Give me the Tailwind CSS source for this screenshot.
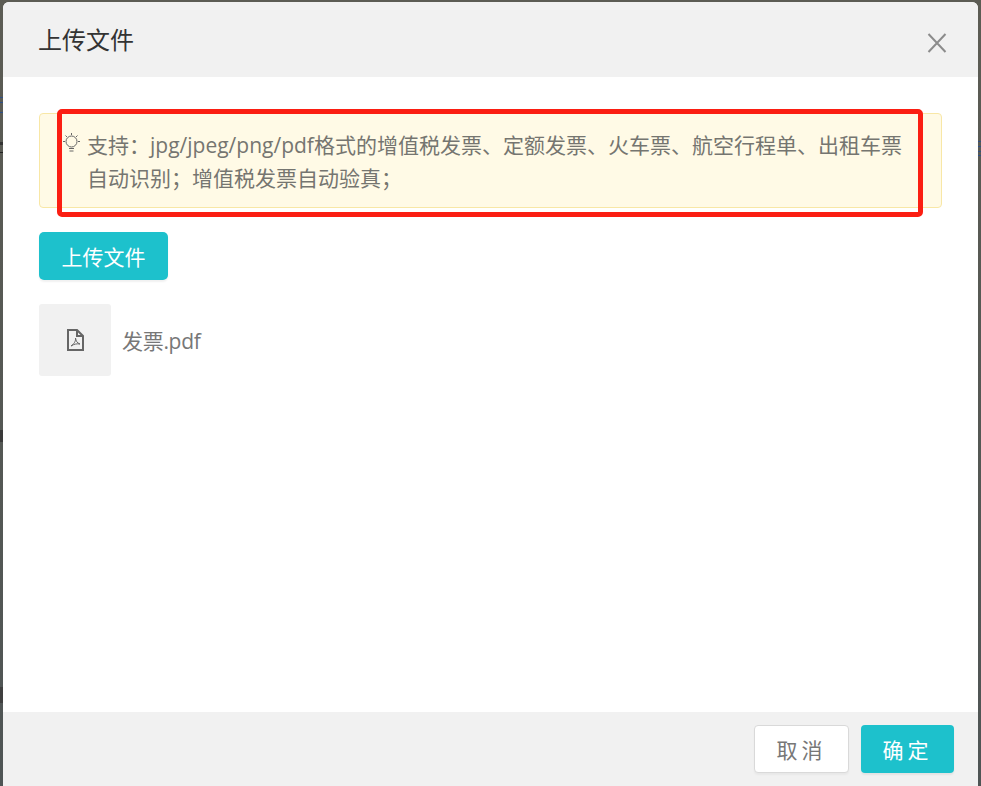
<!DOCTYPE html>
<html lang="zh-CN">
<head>
<meta charset="utf-8">
<title>上传文件</title>
<script src="https://cdn.jsdelivr.net/npm/@tailwindcss/browser@4"></script>
</head>
<body class="relative w-[981px] h-[786px] overflow-hidden bg-gradient-to-b from-[#5c5c54] to-[#4f5555] font-['Open_Sans','Noto_Sans_CJK_SC',sans-serif]">
    <!-- Bits of the page behind the overlay, visible in the gutters -->
    <div class="absolute left-0 top-[97px] w-[3px] h-[1px] bg-[#2f4f86]"></div>
    <div class="absolute left-0 top-[102px] w-[3px] h-[1px] bg-[#2f4f86]"></div>
    <div class="absolute left-0 top-[112px] w-[3px] h-[1px] bg-[#2f4f86]"></div>
    <div class="absolute left-0 top-[142px] w-[3px] h-[3px] bg-[#333]"></div>
    <div class="absolute left-0 top-[152px] w-[3px] h-[1px] bg-[#222]"></div>
    <div class="absolute left-0 top-[430px] w-[3px] h-[12px] bg-[#3a3a3a]"></div>
    <div class="absolute left-0 top-[687px] w-[3px] h-[16px] bg-[#3f3f3f]"></div>
    <div class="absolute right-0 top-[141px] w-[3px] h-[1px] bg-[#2f4f86]"></div>
    <div class="absolute right-0 top-[146px] w-[3px] h-[1px] bg-[#2f4f86]"></div>
    <div class="absolute right-0 top-[151px] w-[3px] h-[1px] bg-[#2f4f86]"></div>
    <div class="absolute right-0 top-[155px] w-[3px] h-[1px] bg-[#2f4f86]"></div>

    <!-- Modal -->
    <div class="relative ml-[3px] mt-[2px] w-[975px] h-[784px] flex flex-col bg-white rounded-t-[6px] overflow-hidden">
        <!-- Header -->
        <div class="h-[75px] shrink-0 bg-[#f1f1f1] flex items-center justify-between pl-[35px] pr-[31px]">
            <h1 class="text-[24px] leading-[32px] text-[#333]">上传文件</h1>
            <svg class="w-[20px] h-[20px] mt-[6px]" viewBox="0 0 20 20" fill="none" stroke="#8c8c8c" stroke-width="2">
                <path d="M1.5 1 L18.5 19 M18.5 1 L1.5 19"/>
            </svg>
        </div>

        <!-- Body -->
        <div class="flex-1 pt-[36px] px-[36px]">
            <!-- Notice -->
            <div class="w-[903px] h-[95px] flex bg-[#fffae6] border border-[#f8e7a6] rounded-[4px] pl-[22px] pt-[15px]">
                <svg class="w-[20px] h-[22px] shrink-0 mt-[3px]" viewBox="0 0 20 22" fill="none" stroke="#666" stroke-width="1">
                    <circle cx="9.5" cy="9.5" r="5.5"/>
                    <path d="M7 16.5 H12 M7.5 19 H11.5 M9.5 1 V3 M3.5 3.5 L5 5 M15.5 3.5 L14 5 M1 9.5 H3 M16 9.5 H18"/>
                </svg>
                <p class="ml-[5px] w-[820px] text-[21px] leading-[33px] text-[#757570]">支持：jpg/jpeg/png/pdf格式的增值税发票、定额发票、火车票、航空行程单、出租车票自动识别；增值税发票自动验真；</p>
            </div>

            <!-- Upload button -->
            <button class="block mt-[24px] w-[129px] h-[48px] pt-[3px] bg-[#1dc1cc] rounded-[5px] text-white text-[21px] shadow-[0_2px_2px_rgba(0,0,0,0.06)]">上传文件</button>

            <!-- File item -->
            <div class="mt-[24px] flex items-center gap-[11px]">
                <div class="w-[72px] h-[72px] bg-[#f1f1f1] rounded-[3px] flex items-center justify-center">
                    <svg class="w-[18px] h-[22px]" viewBox="0 0 18 22" fill="none" stroke="#666" stroke-width="2">
                        <path d="M2 1 H11 L17 7 V21 H2 Z M11 1 V7 H17"/>
                        <path d="M5 17 C8 15 10 12 9.5 9 C10 12 11 14 14 15 C11 14.5 8 15 5 17 Z" stroke-width="1"/>
                    </svg>
                </div>
                <span class="text-[21px] pt-[4px] tracking-[-0.3px] text-[#777]">发票.pdf</span>
            </div>
        </div>

        <!-- Footer -->
        <div class="h-[74px] shrink-0 bg-[#f1f1f1] flex justify-end gap-[12px] pt-[13px] pr-[24px]">
            <button class="w-[95px] h-[48px] pt-[3px] bg-white border border-[#d9d9d9] rounded-[4px] text-[21px] tracking-[4px] text-[#777] shadow-[0_2px_2px_rgba(0,0,0,0.04)]">取消</button>
            <button class="w-[93px] h-[48px] pt-[3px] bg-[#1dc1cc] rounded-[4px] text-[21px] tracking-[4px] text-white shadow-[0_2px_2px_rgba(0,0,0,0.06)]">确定</button>
        </div>
    </div>

    <!-- Red annotation over the notice -->
    <div class="absolute left-[57px] top-[109px] w-[866px] h-[108px] border-[5px] border-[#fb1e12] rounded-[5px]"></div>
</body>
</html>
